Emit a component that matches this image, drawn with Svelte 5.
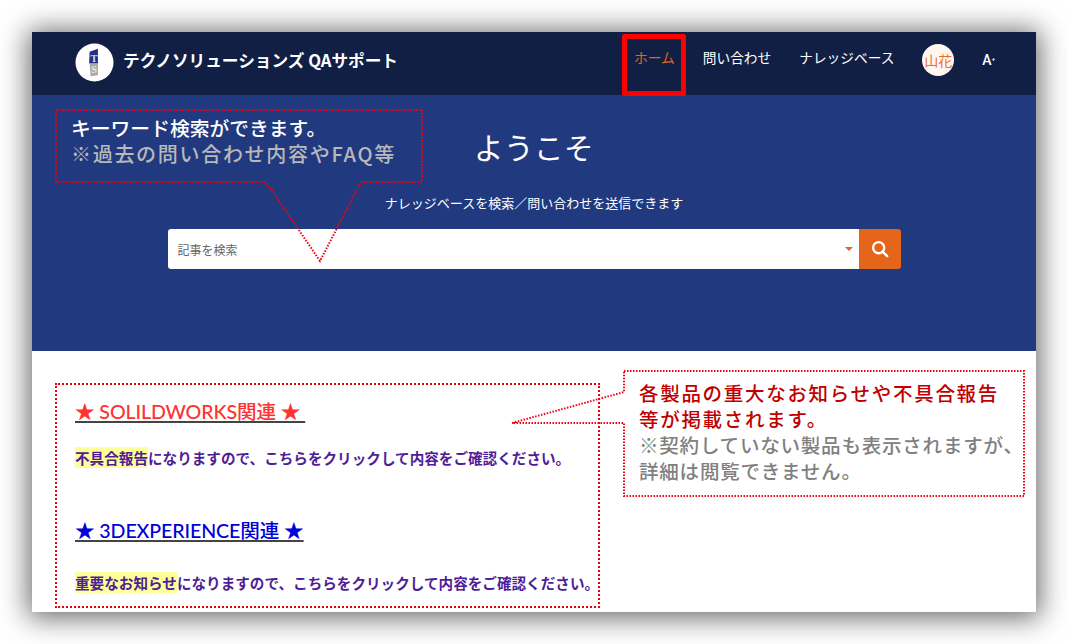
<script>
  const navItems = [
    { label: 'ホーム', active: true },
    { label: '問い合わせ', active: false },
    { label: 'ナレッジベース', active: false }
  ];
</script>

<div class="stage">
  <div class="shot">
    <header class="topbar">
      <div class="brand">
        <svg class="logo" viewBox="0 0 40 40" aria-hidden="true">
          <circle cx="20" cy="20" r="19.500" fill="#fff" />
          <path d="M15 9 L23.500 6 V21 H14.500 Z" fill="#24307f" />
          <path d="M15 21.500 H23.500 V33 L16 34 Z" fill="#a9a9a9" />
          <text x="19.500" y="19" class="logo-t">T</text>
          <text x="19.500" y="31" class="logo-s">S</text>
        </svg>
        <span class="brand-name">テクノソリューションズ QAサポート</span>
      </div>
      <nav class="nav">
        {#each navItems as item}
          <a class="nav-link" class:active={item.active} href="#top">{item.label}</a>
        {/each}
        <span class="avatar">山花</span>
        <span class="font-toggle">A<sup>+</sup></span>
      </nav>
    </header>

    <section class="hero">
      <h1 class="title">ようこそ</h1>
      <p class="subtitle">ナレッジベースを検索／問い合わせを送信できます</p>
      <div class="search">
        <div class="search-input">
          <span class="placeholder">記事を検索</span>
          <span class="caret"></span>
        </div>
        <button class="search-btn" aria-label="検索">
          <svg viewBox="0 0 20 20" width="18" height="18" fill="none" stroke="#fff" stroke-width="2.600" stroke-linecap="round">
            <circle cx="8.500" cy="8.500" r="6.200" />
            <path d="M13.200 13.200 L18 18" />
          </svg>
        </button>
      </div>
    </section>

    <main class="content">
      <div class="notices">
        <h2 class="notice-title"><a class="red" href="#top">★ SOLILDWORKS関連 ★&nbsp;</a></h2>
        <p class="notice-text"><mark>不具合報告</mark>になりますので、こちらをクリックして内容をご確認ください。</p>
        <h2 class="notice-title second"><a class="blue" href="#top">★ 3DEXPERIENCE関連 ★</a></h2>
        <p class="notice-text"><mark>重要なお知らせ</mark>になりますので、こちらをクリックして内容をご確認ください。</p>
      </div>
    </main>

    <div class="nav-highlight"></div>

    <svg class="callout-lines" viewBox="0 0 1004 580" aria-hidden="true">
      <path d="M24 78 H390 V150 H329 L288 229 L234 150 H24 Z" />
      <path d="M592 339 H992 V464 H592 V391 H480 L592 360 Z" />
    </svg>

    <div class="note note-search">
      <div class="note-white">キーワード検索ができます。</div>
      <div class="note-grey">※過去の問い合わせ内容やFAQ等</div>
    </div>

    <div class="note note-products">
      <div class="note-red">各製品の重大なお知らせや不具合報告<br />等が掲載されます。</div>
      <div class="note-gray">※契約していない製品も表示されますが、<br />詳細は閲覧できません。</div>
    </div>
  </div>
</div>

<style>
  :global(body) {
    margin: 0;
    background: #fff;
    overflow: hidden;
  }

  .stage {
    width: 1068px;
    height: 644px;
    padding: 32px;
    box-sizing: border-box;
    font-family: "Noto Sans CJK JP", "Noto Sans", sans-serif;
  }

  .shot {
    position: relative;
    width: 1004px;
    height: 580px;
    display: flex;
    flex-direction: column;
    background: #fff;
    box-shadow: 0 2px 26px 4px rgba(0, 0, 0, 0.58);
  }

  .topbar {
    height: 63px;
    flex: none;
    display: flex;
    align-items: center;
    justify-content: space-between;
    padding: 0 41px 0 43px;
    background: #121f45;
  }

  .brand {
    display: flex;
    align-items: center;
    gap: 9px;
  }

  .logo {
    width: 39px;
    height: 39px;
    margin-top: -3px;
  }

  .logo-t,
  .logo-s {
    font: 700 11px "Liberation Serif", serif;
    text-anchor: middle;
  }

  .logo-t {
    fill: #cfd6f0;
  }

  .logo-s {
    fill: #e6e6e6;
  }

  .brand-name {
    font-size: 16.650px;
    font-weight: 700;
    color: #fff;
    margin-top: -7px;
  }

  .nav {
    display: flex;
    align-items: center;
    gap: 28px;
    height: 100%;
    padding-bottom: 8px;
    box-sizing: border-box;
  }

  .nav-link {
    font-size: 13.700px;
    color: #fff;
    text-decoration: none;
    margin-top: -6px;
  }

  .nav-link.active {
    color: #e5651a;
  }

  .avatar {
    width: 32px;
    height: 32px;
    border-radius: 50%;
    background: #fff6ef;
    color: #e8701f;
    font-size: 14px;
    display: flex;
    align-items: center;
    justify-content: center;
  }

  .font-toggle {
    font: 500 14px "Roboto", sans-serif;
    color: #fff;
  }

  .font-toggle sup {
    font-size: 6px;
    vertical-align: 4px;
    line-height: 0;
  }

  .hero {
    height: 256px;
    flex: none;
    display: flex;
    flex-direction: column;
    align-items: center;
    box-sizing: border-box;
    padding-top: 29px;
    background: #213a7f;
  }

  .title {
    margin: 0;
    font-size: 29.500px;
    font-weight: 400;
    line-height: 44px;
    color: #fff;
    letter-spacing: 0.500px;
  }

  .subtitle {
    margin: 25px 0 0;
    font-size: 13px;
    line-height: 20px;
    color: #fff;
  }

  .search {
    display: flex;
    width: 733px;
    height: 40px;
    margin-top: 16px;
    border-radius: 3px;
    overflow: hidden;
  }

  .search-input {
    flex: 1;
    display: flex;
    align-items: center;
    justify-content: space-between;
    padding: 0 6px 0 10px;
    background: #fff;
  }

  .placeholder {
    font-size: 12px;
    color: #666;
  }

  .caret {
    width: 0;
    height: 0;
    border-left: 4px solid transparent;
    border-right: 4px solid transparent;
    border-top: 4px solid #e5651a;
  }

  .search-btn {
    width: 42px;
    border: 0;
    padding: 0;
    display: flex;
    align-items: center;
    justify-content: center;
    background: #e5651a;
  }

  .content {
    flex: 1;
    padding: 32px 0 0 23px;
    box-sizing: border-box;
    overflow: hidden;
  }

  .notices {
    width: 545px;
    height: 225px;
    box-sizing: border-box;
    border: 2px dotted #e8000f;
    padding: 14px 0 0 18px;
  }

  .notice-title {
    margin: 0;
    font: 500 19.600px/26px "Lato", "Noto Sans CJK JP", sans-serif;
    letter-spacing: -0.100px;
    display: block;
  }

  .notice-title.second {
    margin-top: 49px;
  }

  .notice-title a {
    text-decoration: underline;
    text-decoration-color: #444;
    text-underline-offset: 2px;
    text-decoration-thickness: 1.500px;
  }

  .red {
    color: #ff3131;
  }

  .blue {
    color: #0000d8;
  }

  .notice-text {
    margin: 22px 0 0;
    font-size: 14.600px;
    font-weight: 700;
    line-height: 22px;
    color: #4f1d96;
    white-space: nowrap;
  }

  .second + .notice-text {
    margin-top: 28px;
  }

  mark {
    background: #ffff99;
    color: inherit;
  }

  .nav-highlight {
    position: absolute;
    left: 590px;
    top: 2px;
    width: 64px;
    height: 62px;
    box-sizing: border-box;
    border: 5px solid #ff0000;
    border-radius: 2px;
  }

  .callout-lines {
    position: absolute;
    inset: 0;
    width: 1004px;
    height: 580px;
    pointer-events: none;
  }

  .callout-lines path {
    fill: none;
    stroke: #f00010;
    stroke-width: 2;
    stroke-dasharray: 1.500 1.500;
  }

  .note {
    position: absolute;
  }

  .note-search {
    left: 39px;
    top: 83px;
    line-height: 25px;
    white-space: nowrap;
  }

  .note-white {
    color: #fff;
    font-size: 19.800px;
    font-weight: 500;
  }

  .note-grey {
    color: #b8b8b8;
    font-size: 20px;
    letter-spacing: 1.700px;
    font-weight: 500;
    margin-top: 1px;
  }

  .note-products {
    left: 607px;
    top: 348px;
    line-height: 26px;
    white-space: nowrap;
  }

  .note-red {
    color: #c00000;
    font-size: 19.500px;
    font-weight: 500;
    letter-spacing: 1.700px;
  }

  .note-gray {
    color: #808080;
    font-size: 19.500px;
    font-weight: 500;
    letter-spacing: 0.800px;
  }
</style>
